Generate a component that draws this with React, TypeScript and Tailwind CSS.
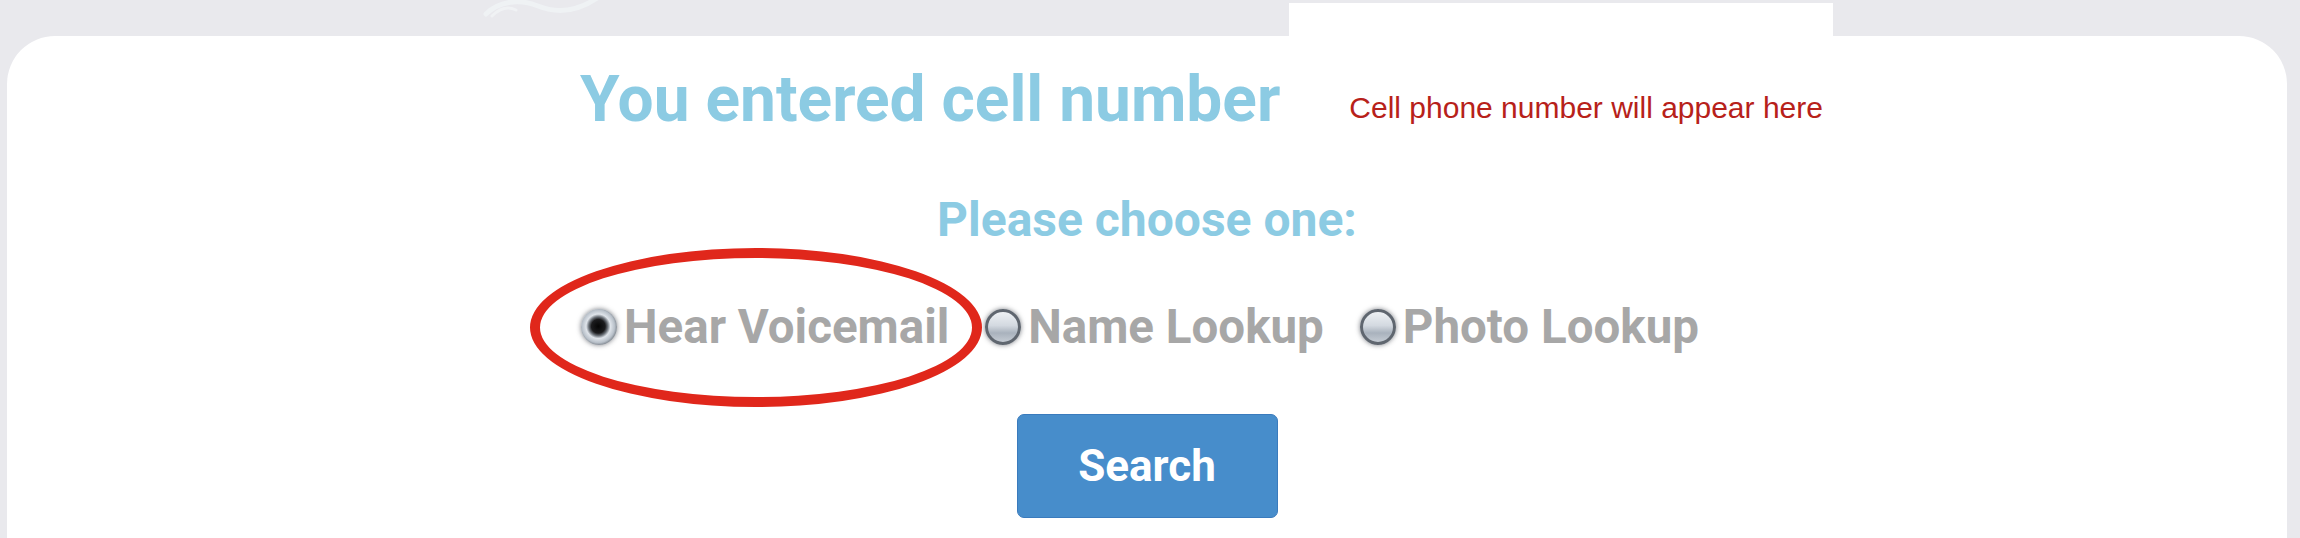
import React, { useState } from 'react';

const options = ['Hear Voicemail', 'Name Lookup', 'Photo Lookup'];

const Radio: React.FC<{ checked: boolean }> = ({ checked }) => {
  if (checked) {
    return (
      <span className="block h-[36px] w-[36px] shrink-0 rounded-full bg-[radial-gradient(circle_at_48%_48%,#050505_0%,#1c1c1e_26%,#6d737a_36%,#dfe4ea_46%,#b8c0c9_62%,#5d636b_78%,#8b9199_100%)] shadow-[0_0_5px_rgba(40,45,55,0.6)]" />
    );
  }
  return (
    <span className="block h-[36px] w-[36px] shrink-0 rounded-full border-[3px] border-[#5f666f] bg-[linear-gradient(180deg,#eef1f4_0%,#d3d9e0_45%,#a9b2bd_70%,#c4cbd3_100%)] shadow-[0_0_5px_rgba(40,45,55,0.6)]" />
  );
};

export default function App() {
  const [choice, setChoice] = useState(0);

  return (
    <div className="relative h-[538px] w-full overflow-hidden bg-[#e9e9ed] pl-[7px] pr-[13px] pt-[36px] font-['Roboto',sans-serif]">
      {/* faint header logo, cut off at the top */}
      <svg className="absolute left-[478px] top-[-6px] opacity-60" width="130" height="24" viewBox="0 0 130 24">
        <path d="M8 20 C 20 8, 40 4, 60 12 S 100 18, 122 2" fill="none" stroke="#f3f8fa" strokeWidth="5" strokeLinecap="round" />
        <path d="M14 22 C 22 14, 30 12, 38 16" fill="none" stroke="#f5f8fa" strokeWidth="3" strokeLinecap="round" />
      </svg>

      <div className="relative h-full rounded-t-[48px] bg-white">
        {/* row 1: title + result box */}
        <div className="ml-[573px] flex items-start gap-[9px]">
          <h1 className="mt-[32px] whitespace-nowrap text-[64px] font-bold leading-[64px] text-[#8ccbe3]">
            You entered cell number
          </h1>
          <div className="-mt-[33px] h-[147px] w-[544px] bg-white pl-[60px] pt-[90px]">
            <p className="whitespace-nowrap font-['Liberation_Sans',Arial,sans-serif] text-[30px] leading-[30px] text-[#b7211a]">
              Cell phone number will appear here
            </p>
          </div>
        </div>

        <h2 className="mt-[46px] text-center text-[48px] font-bold leading-[48px] text-[#8ccbe3]">
          Please choose one:
        </h2>

        <div className="mt-[60px] flex items-center justify-center gap-[36px] pr-[14px]">
          {options.map((label, i) => (
            <button
              key={label}
              onClick={() => setChoice(i)}
              className="flex items-center gap-[7px] whitespace-nowrap text-[47.5px] font-bold leading-[46px] text-[#a7a7a7]"
            >
              <Radio checked={choice === i} />
              {label}
            </button>
          ))}
        </div>

        <div className="mt-[64px] flex justify-center">
          <button className="h-[104px] w-[261px] rounded-[7px] border border-[#3a7bbd] bg-[#478dcb] text-[44px] font-bold text-white">
            Search
          </button>
        </div>

        {/* annotation circle */}
        <div className="pointer-events-none absolute left-[523px] top-[212px] h-[159px] w-[452px] rounded-[50%] border-[10px] border-[#e0271b]" />
      </div>
    </div>
  );
}
